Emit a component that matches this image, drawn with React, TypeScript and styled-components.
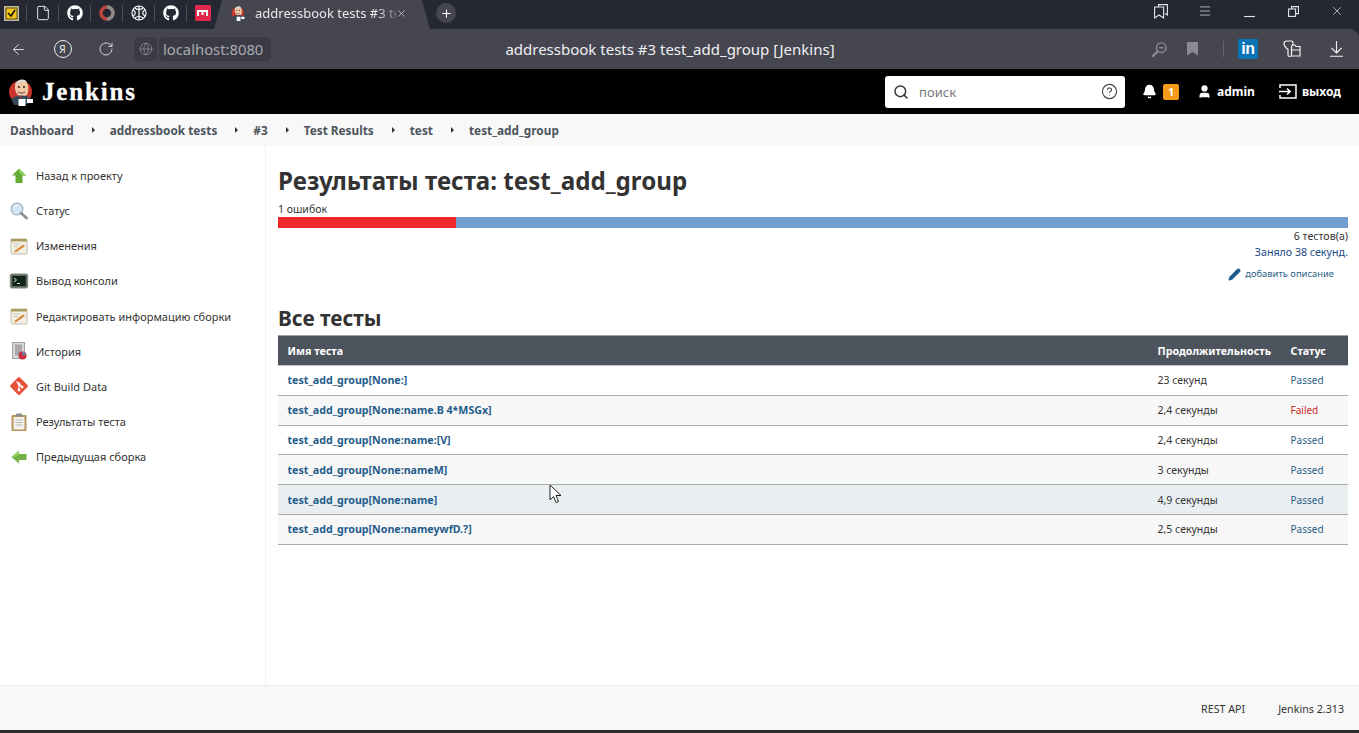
import React from "react";
import styled, { createGlobalStyle } from "styled-components";
import { ArrowLeft, Bell, CircleHelp, File, Globe, Menu, Plus, RotateCw, Search, User, X, Pencil } from "lucide-react";
import { FaGithub } from "react-icons/fa";

const GlobalStyle = createGlobalStyle`
  html, body { margin: 0; padding: 0; height: 100%; background: #fff; overflow: hidden; }
  body { font-family: "Noto Sans", "Open Sans", "Liberation Sans", sans-serif; color: #333; }
  * { box-sizing: border-box; }
`;

const Page = styled.div`
  position: relative;
  width: 1359px;
  height: 733px;
  display: flex;
  flex-direction: column;
  overflow: hidden;
  background: #252833;
`;

const TabStrip = styled.div`
  height: 29px;
  background: #252833;
  display: flex;
  align-items: center;
  color: #fff;
  flex: none;
`;

const PinnedTabs = styled.div`
  display: flex;
  align-items: center;
  height: 100%;
  margin-left: -5px;
`;

const Pinned = styled.div`
  width: 32px;
  height: 100%;
  display: flex;
  align-items: center;
  justify-content: center;
  position: relative;
  padding-bottom: 3px;
  &:not(:last-child)::after {
    content: "";
    position: absolute;
    right: 0;
    top: 5px;
    bottom: 7px;
    width: 1px;
    background: #4a4c56;
  }
`;

const ActiveTab = styled.div`
  width: 216px;
  height: 29px;
  margin-left: -5px;
  background: #45464f;
  clip-path: polygon(8px 0, 208px 0, 216px 100%, 0 100%);
  display: flex;
  align-items: center;
  padding: 0 0 3px 17px;
  font-size: 13px;
  color: #e8e8ea;
`;

const TabTitle = styled.span`
  width: 141px;
  margin-left: 10px;
  white-space: nowrap;
  -webkit-mask-image: linear-gradient(to right, #000 86%, rgba(0, 0, 0, 0.25) 100%);
  mask-image: linear-gradient(to right, #000 86%, rgba(0, 0, 0, 0.25) 100%);
`;

const NewTab = styled.div`
  width: 20px;
  height: 20px;
  margin-left: 6px;
  margin-bottom: 3px;
  border-radius: 50%;
  background: #45464f;
  display: flex;
  align-items: center;
  justify-content: center;
`;

const WindowControls = styled.div`
  margin-left: auto;
  display: flex;
  align-items: center;
  margin-bottom: 7px;
  color: #e6e6e8;
`;

const Toolbar = styled.div`
  height: 40px;
  flex: none;
  background: #45464f;
  border-top-right-radius: 9px;
  display: flex;
  align-items: center;
  color: #f2f2f2;
  padding-left: 10px;
  position: relative;
`;

const ToolIcons = styled.div`
  display: flex;
  align-items: center;
  gap: 26.5px;
  width: 124px;
  flex: none;
`;

const YandexCircle = styled.div`
  width: 18px;
  height: 18px;
  border: 1.3px solid #eee;
  border-radius: 50%;
  font-size: 10px;
  display: flex;
  align-items: center;
  justify-content: center;
  flex: none;
`;

const SiteChip = styled.div`
  width: 23px;
  height: 24px;
  background: #3a3b44;
  border-radius: 5px;
  display: flex;
  align-items: center;
  justify-content: center;
  color: #8a8b92;
  flex: none;
`;

const AddressChip = styled.div`
  height: 24px;
  margin-left: 2px;
  padding: 0 4px;
  width: 112px;
  background: #3a3b44;
  border-radius: 5px;
  font-size: 14.8px;
  line-height: 24px;
  color: #a9aab0;
  white-space: nowrap;
  flex: none;
`;

const PageTitle = styled.div`
  position: absolute;
  left: 0;
  right: 19px;
  top: 0;
  line-height: 40px;
  text-align: center;
  font-size: 15px;
  color: #f0f0f2;
  pointer-events: none;
`;

const ToolRight = styled.div`
  margin-left: auto;
  display: flex;
  align-items: center;
  padding-right: 1px;
`;

const ToolSlot = styled.div<{ $w: number }>`
  width: ${(p) => p.$w}px;
  display: flex;
  justify-content: center;
  align-items: center;
`;

const Divider = styled.div`
  width: 1px;
  height: 16px;
  margin: 0 2px 0 15px;
  background: #65666e;
`;

const LinkedIn = styled.div`
  width: 20px;
  height: 20px;
  background: #0a74b5;
  border-radius: 1px;
  color: #fff;
  font: 700 16px/20px "Liberation Sans", sans-serif;
  text-align: center;
  letter-spacing: -0.3px;
`;

const JenkinsHeader = styled.header`
  height: 45px;
  background: #000;
  display: flex;
  align-items: center;
  padding-left: 8px;
  color: #fff;
  flex: none;
`;

const Wordmark = styled.a`
  font: 700 25px "Liberation Serif", Georgia, serif;
  margin-left: 8px;
  letter-spacing: 1.85px;
  -webkit-text-stroke: 0.3px #fff;
`;

const SearchBox = styled.div`
  margin-left: auto;
  width: 240px;
  height: 32px;
  background: #fff;
  border-radius: 3px;
  display: flex;
  align-items: center;
  padding: 0 7px 0 8px;
  color: #333;
  font-size: 13px;
`;

const SearchHint = styled.span`
  color: #777;
  margin-left: 10px;
  flex: 1;
  padding-top: 1px;
`;

const HeadItem = styled.div<{ $ml: number; $mr?: number }>`
  display: flex;
  align-items: center;
  gap: 5px;
  margin-left: ${(p) => p.$ml}px;
  margin-right: ${(p) => p.$mr ?? 0}px;
  font-size: 12px;
  font-weight: 700;
  color: #fff;
`;

const CountBadge = styled.span`
  background: #f59a1b;
  color: #fff;
  width: 16px;
  height: 16px;
  border-radius: 2px;
  font-size: 11px;
  line-height: 16px;
  text-align: center;
  margin-left: 1px;
`;

const Breadcrumbs = styled.nav`
  height: 32px;
  background: #f8f8f8;
  display: flex;
  align-items: center;
  padding-left: 10px;
  font-size: 11.8px;
  font-weight: 700;
  color: #4d545d;
  flex: none;
`;

const Crumb = styled.a`
  white-space: nowrap;
`;

const Caret = styled.span`
  width: 0;
  height: 0;
  margin: 0 15px 0 18px;
  border-left: 3px solid #333;
  border-top: 3px solid transparent;
  border-bottom: 3px solid transparent;
`;

const Body = styled.div`
  display: flex;
  flex: 1;
  min-height: 0;
  background: #fff;
`;

const Sidebar = styled.aside`
  width: 266px;
  flex: none;
  border-right: 1px solid #f0f0f0;
  padding-top: 12px;
`;

const Task = styled.a`
  height: 35.15px;
  display: flex;
  align-items: center;
  padding-left: 10px;
  gap: 8px;
  font-size: 11px;
  color: #333;
`;

const TaskIcon = styled.svg`
  width: 18px;
  height: 18px;
  flex: none;
  overflow: visible;
`;

const Main = styled.main`
  flex: 1;
  min-width: 0;
  padding: 20px 11px 0 12px;
`;

const Title = styled.h1`
  margin: 0;
  font-size: 24.15px;
  font-weight: 700;
  line-height: 30px;
  color: #333;
`;

const FailCount = styled.div`
  font-size: 10.5px;
  line-height: 15px;
  margin-top: 6px;
  color: #333;
`;

const Bar = styled.div`
  height: 11px;
  display: flex;
  background: #729fcf;
`;

const BarFail = styled.div`
  background: #ef2929;
`;

const Meta = styled.div`
  text-align: right;
  font-size: 10.65px;
  line-height: 16px;
`;

const TimeLink = styled.a`
  color: #204a87;
  display: block;
`;

const AddDesc = styled.a`
  display: flex;
  justify-content: flex-end;
  align-items: center;
  gap: 4px;
  font-size: 9.4px;
  line-height: 14px;
  color: #2b6086;
  padding-right: 14px;
  margin-top: 7px;
`;

const SectionTitle = styled.h2`
  margin: 22px 0 0;
  font-size: 20.8px;
  line-height: 30px;
  font-weight: 700;
  color: #333;
`;

const Table = styled.table`
  width: 100%;
  border-collapse: collapse;
  table-layout: fixed;
  margin-top: 2px;
  font-size: 10.5px;
`;

const Th = styled.th<{ $w?: number }>`
  height: 30px;
  background: #4d545d;
  color: #fff;
  font-size: 10.7px;
  font-weight: 700;
  text-align: left;
  padding: 0 0 0 9.5px;
  border-top: 1px solid #9aa0a6;
  border-bottom: 1px solid #c4c7ca;
  width: ${(p) => (p.$w ? `${p.$w}px` : "auto")};
`;

const Row = styled.tr<{ $shade: string }>`
  height: 29.8px;
  background: ${(p) => p.$shade};
`;

const Td = styled.td`
  padding: 0 0 0 9.5px;
  border-bottom: 1px solid #a8acb0;
  color: #333;
`;

const TestLink = styled.a`
  color: #1f5c8a;
  font-weight: 700;
  font-size: 10.65px;
`;

const Status = styled.span<{ $failed: boolean }>`
  font-size: 10px;
  color: ${(p) => (p.$failed ? "#cc2a2a" : "#2b6086")};
`;

const Footer = styled.footer`
  height: 45px;
  flex: none;
  background: #f8f8f8;
  border-top: 1px solid #ececec;
  display: flex;
  justify-content: flex-end;
  align-items: center;
  gap: 33px;
  padding: 2px 15px 0 0;
  font-size: 10.7px;
  color: #333;
`;

const BottomEdge = styled.div`
  height: 3px;
  flex: none;
  background: #2c2c2c;
`;

const Pointer = styled.svg`
  position: absolute;
  left: 549px;
  top: 484px;
`;

const tests = [
  { name: "test_add_group[None:]", time: "23 секунд", status: "Passed", shade: "#ffffff" },
  { name: "test_add_group[None:name.B 4*MSGx]", time: "2,4 секунды", status: "Failed", shade: "#f7f7f8" },
  { name: "test_add_group[None:name:[V]", time: "2,4 секунды", status: "Passed", shade: "#ffffff" },
  { name: "test_add_group[None:nameM]", time: "3 секунды", status: "Passed", shade: "#f7f7f8" },
  { name: "test_add_group[None:name]", time: "4,9 секунды", status: "Passed", shade: "#e9eef1" },
  { name: "test_add_group[None:nameywfD.?]", time: "2,5 секунды", status: "Passed", shade: "#f7f7f8" },
];

const crumbs = ["Dashboard", "addressbook tests", "#3", "Test Results", "test", "test_add_group"];

const JenkinsLogo = ({ size = 26 }: { size?: number }) => (
  <svg width={size} height={size * 1.15} viewBox="0 0 26 30">
    <circle cx="12.500" cy="15" r="11.500" fill="#c8352c" />
    <path d="M7 11c-1-8 11-11 13-3 1 4 0 8-1 10-3 2-8 2-10-1-1-2-2-3-2-6z" fill="#f0c8a8" />
    <path d="M7 9c0-6 9-9 12-4-3-1-9-1-12 4z" fill="#d9dce0" />
    <circle cx="11" cy="10" r="1" fill="#222" />
    <circle cx="16" cy="10" r="1" fill="#222" />
    <path d="M10 15c2 1.500 5 1.500 7 0" stroke="#7a3a2a" fill="none" />
    <path d="M3.500 23c1-5 15-6 18-2l1 5-8 2H6z" fill="#34495a" />
    <path d="M11 19l3 1-1 2z" fill="#c8352c" />
    <path d="M10.500 22h7v8h-7zM19 22h6v4h-6z" fill="#fff" />
  </svg>
);

const PagesIcon = () => (
  <svg width="14" height="15" viewBox="0 0 14 15" fill="none" stroke="currentColor" strokeWidth="1.1">
    <path d="M4.500 3V.6h8.900v10.400L11 9.500" />
    <path d="M.6 3h9v11l-4.500-3-4.500 3z" />
  </svg>
);

const MinimizeIcon = () => (
  <svg width="11" height="14" viewBox="0 0 11 14" stroke="currentColor" strokeWidth="1.1">
    <path d="M0 12.500h11" />
  </svg>
);

const RestoreIcon = () => (
  <svg width="11" height="11" viewBox="0 0 11 11" fill="none" stroke="currentColor" strokeWidth="1.1">
    <path d="M3.500 3V.6h7v7H8" />
    <rect x=".6" y="3" width="7" height="7.400" />
  </svg>
);

const ZoomMinusIcon = () => (
  <svg width="15" height="15" viewBox="0 0 15 15" fill="none" stroke="#8a8b92" strokeWidth="1.4">
    <circle cx="9.300" cy="5.700" r="4.800" />
    <path d="M6.800 5.700h5" />
    <path d="M5.500 9.500L1 14" strokeWidth="2.400" strokeLinecap="round" />
  </svg>
);

const BookmarkIcon = () => (
  <svg width="11" height="14" viewBox="0 0 11 14">
    <path d="M0 0h11v13.500L5.500 10 0 13.500z" fill="#8a8b92" />
  </svg>
);

const ExtensionIcon = () => (
  <svg width="18" height="18" viewBox="0 0 18 18" fill="none" stroke="currentColor" strokeWidth="1.2">
    <path d="M1 3.500C1 1.500 2.500 1 4 1h4c2 0 2.500 1.500 2 3l-1.500 2.500V15c0 2-3.500 2-3.500 0V9.500C3 8 1 6 1 3.500z" />
    <path d="M9.500 5H12l1 1.500h4V16H8.500M8.800 10H17" />
  </svg>
);

const DownloadIcon = () => (
  <svg width="13" height="16" viewBox="0 0 13 16" fill="none" stroke="currentColor" strokeWidth="1.1">
    <path d="M6.500 0v11.500M1.500 7l5 5 5-5M0 15.300h13" />
  </svg>
);

const LogoutIcon = () => (
  <svg width="18" height="15" viewBox="0 0 18 15" fill="none" stroke="currentColor" strokeWidth="1.5">
    <path d="M1 4V1h16v13H1v-3" />
    <path d="M0 7.500h11M8 4.500l3.200 3L8 10.500" />
  </svg>
);

const taskIcons: React.ReactNode[] = [
  <g key="0">
    <path d="M9 1.500l7 7h-3.500v7.500h-7V8.500H2z" fill="#63ad35" />
    <path d="M9 1.500l7 7h-3.500L9 5z" fill="#8ccf5a" />
  </g>,
  <g key="1">
    <circle cx="7" cy="7" r="5.800" fill="#d6e5f5" stroke="#9ab0c8" strokeWidth="1.300" />
    <path d="M4 5c1-1.500 3-2 4.500-1.500" stroke="#fff" fill="none" />
    <path d="M11.200 11.200l5.300 4.800" stroke="#8b8f96" strokeWidth="2.800" strokeLinecap="round" />
  </g>,
  <g key="2">
    <rect x="1" y="2" width="16" height="15" rx="1" fill="#f2f0e4" stroke="#c0bdae" />
    <path d="M1 2h16v2.500H1z" fill="#a89c5e" />
    <path d="M5 13.500l8-6 2 1.500-8.500 6L4 15.500z" fill="#d98a3a" />
    <path d="M3.500 7h6M3.500 9.500h4" stroke="#c9c7b8" />
  </g>,
  <g key="3">
    <rect x="0.300" y="2" width="17.400" height="14" rx="1.500" fill="#5f6d5f" stroke="#888" />
    <rect x="2.300" y="4" width="13.400" height="10" fill="#10251a" />
    <path d="M4 6l2.500 2L4 10M7 11.500h3" stroke="#e2e2e2" strokeWidth="1" fill="none" />
  </g>,
  <g key="4">
    <rect x="1" y="2" width="16" height="15" rx="1" fill="#f2f0e4" stroke="#c0bdae" />
    <path d="M1 2h16v2.500H1z" fill="#a89c5e" />
    <path d="M5 13.500l8-6 2 1.500-8.500 6L4 15.500z" fill="#d98a3a" />
    <path d="M3.500 7h6M3.500 9.500h4" stroke="#c9c7b8" />
  </g>,
  <g key="5">
    <rect x="2.500" y="0.500" width="12" height="16" fill="#d8d8d8" stroke="#a0a0a0" />
    <rect x="5" y="2.500" width="7" height="11" fill="#a8a8a8" />
    <circle cx="12.500" cy="13.500" r="4" fill="#c92f3f" />
    <path d="M12.500 13.500l3.500-1a4 4 0 0 0-3.500-3z" fill="#5f8fbf" />
  </g>,
  <g key="6">
    <rect x="2.300" y="2.300" width="13.400" height="13.400" rx="1.500" transform="rotate(45 9 9)" fill="#e8503a" />
    <path d="M6.500 4.500l5.500 5.500M9 7v6" stroke="#fff" strokeWidth="1.200" />
    <circle cx="9" cy="13" r="1.400" fill="#fff" />
    <circle cx="12" cy="10" r="1.400" fill="#fff" />
    <circle cx="9" cy="7" r="1.400" fill="#fff" />
  </g>,
  <g key="7">
    <rect x="1.500" y="2" width="15" height="16" rx="1" fill="#b8935a" />
    <rect x="3.500" y="4" width="11" height="12.500" fill="#f0f0ec" />
    <rect x="6" y="0.500" width="6" height="3" rx="1" fill="#8e8e8e" />
    <path d="M5.500 7h7M5.500 9.500h7M5.500 12h7" stroke="#bbb" />
  </g>,
  <g key="8">
    <path d="M1.500 9l7.500-6.500V6h7.500v6H9v3.500z" fill="#72b344" />
    <path d="M1.500 9L9 2.500V6L5 9z" fill="#97d068" />
  </g>,
];

const taskLabels = [
  "Назад к проекту",
  "Статус",
  "Изменения",
  "Вывод консоли",
  "Редактировать информацию сборки",
  "История",
  "Git Build Data",
  "Результаты теста",
  "Предыдущая сборка",
];

const App: React.FC = () => (
  <Page>
    <GlobalStyle />
    <TabStrip>
      <PinnedTabs>
        <Pinned>
          <svg width="15" height="15" viewBox="0 0 15 15">
            <rect x="0.500" y="0.500" width="14" height="14" fill="#f3c614" stroke="#bbb" />
            <rect x="2" y="2" width="11" height="11" fill="#f3c614" stroke="#444" />
            <path d="M4 7l3 3 4-6" stroke="#111" strokeWidth="1.600" fill="none" />
          </svg>
        </Pinned>
        <Pinned><File size={16} color="#fff" strokeWidth={1.3} /></Pinned>
        <Pinned><FaGithub size={16} color="#fff" /></Pinned>
        <Pinned>
          <svg width="16" height="16" viewBox="0 0 16 16">
            <circle cx="8" cy="8" r="6" fill="none" stroke="#b9453f" strokeWidth="3.500" />
            <path d="M8 2a6 6 0 0 1 0 12" fill="none" stroke="#8b8b8b" strokeWidth="3.500" />
          </svg>
        </Pinned>
        <Pinned>
          <svg width="16" height="16" viewBox="0 0 16 16" fill="none" stroke="#fff" strokeWidth="1.200">
            <circle cx="8" cy="8" r="7" />
            <path d="M8 1v14M2 5c3 1 3 5 0 6M14 5c-3 1-3 5 0 6M4 3c2 2 6 2 8 0M4 13c2-2 6-2 8 0" />
          </svg>
        </Pinned>
        <Pinned><FaGithub size={16} color="#fff" /></Pinned>
        <Pinned>
          <svg width="16" height="16" viewBox="0 0 16 16">
            <rect width="16" height="16" fill="#e0274c" rx="1" />
            <path d="M3 11V6h9v5M7.500 6v4" stroke="#fff" strokeWidth="2" fill="none" />
          </svg>
        </Pinned>
      </PinnedTabs>
      <ActiveTab>
        <JenkinsLogo size={14} />
        <TabTitle>addressbook tests #3 te</TabTitle>
        <X size={11} strokeWidth={1.5} color="#ddd" />
      </ActiveTab>
      <NewTab><Plus size={13} /></NewTab>
      <WindowControls>
        <ToolSlot $w={44}><PagesIcon /></ToolSlot>
        <ToolSlot $w={44}><Menu size={14} strokeWidth={1.2} /></ToolSlot>
        <ToolSlot $w={44}><MinimizeIcon /></ToolSlot>
        <ToolSlot $w={44}><RestoreIcon /></ToolSlot>
        <ToolSlot $w={44}><X size={14} strokeWidth={1.2} /></ToolSlot>
      </WindowControls>
    </TabStrip>
    <Toolbar>
      <ToolIcons>
        <ArrowLeft size={17} strokeWidth={1.2} />
        <YandexCircle>Я</YandexCircle>
        <RotateCw size={16} strokeWidth={1.2} />
      </ToolIcons>
      <SiteChip><Globe size={14} strokeWidth={1.4} /></SiteChip>
      <AddressChip>localhost:8080</AddressChip>
      <PageTitle>addressbook tests #3 test_add_group [Jenkins]</PageTitle>
      <ToolRight>
        <ToolSlot $w={34}><ZoomMinusIcon /></ToolSlot>
        <ToolSlot $w={32}><BookmarkIcon /></ToolSlot>
        <Divider />
        <ToolSlot $w={44}><LinkedIn>in</LinkedIn></ToolSlot>
        <ToolSlot $w={44}><ExtensionIcon /></ToolSlot>
        <ToolSlot $w={44}><DownloadIcon /></ToolSlot>
      </ToolRight>
    </Toolbar>
    <JenkinsHeader>
      <JenkinsLogo />
      <Wordmark>Jenkins</Wordmark>
      <SearchBox>
        <Search size={16} strokeWidth={2.2} />
        <SearchHint>поиск</SearchHint>
        <CircleHelp size={17} strokeWidth={1.6} color="#444" />
      </SearchBox>
      <HeadItem $ml={17}>
        <Bell size={15} fill="#fff" />
        <CountBadge>1</CountBadge>
      </HeadItem>
      <HeadItem $ml={18}>
        <User size={15} fill="#fff" />
        admin
      </HeadItem>
      <HeadItem $ml={24} $mr={18}>
        <LogoutIcon />
        выход
      </HeadItem>
    </JenkinsHeader>
    <Breadcrumbs>
      {crumbs.map((c, i) => (
        <React.Fragment key={c}>
          {i > 0 && <Caret />}
          <Crumb>{c}</Crumb>
        </React.Fragment>
      ))}
    </Breadcrumbs>
    <Body>
      <Sidebar>
        {taskLabels.map((label, i) => (
          <Task key={label}>
            <TaskIcon viewBox="0 0 18 18">{taskIcons[i]}</TaskIcon>
            {label}
          </Task>
        ))}
      </Sidebar>
      <Main>
        <Title>Результаты теста: test_add_group</Title>
        <FailCount>1 ошибок</FailCount>
        <Bar>
          <BarFail style={{ width: `${(1 / 6) * 100}%` }} />
        </Bar>
        <Meta>
          6 тестов(а)
          <TimeLink>Заняло 38 секунд.</TimeLink>
        </Meta>
        <AddDesc>
          <Pencil size={13} fill="#1f5c8a" color="#1f5c8a" />
          добавить описание
        </AddDesc>
        <SectionTitle>Все тесты</SectionTitle>
        <Table>
          <thead>
            <tr>
              <Th>Имя теста</Th>
              <Th $w={133}>Продолжительность</Th>
              <Th $w={67}>Статус</Th>
            </tr>
          </thead>
          <tbody>
            {tests.map((t) => (
              <Row key={t.name} $shade={t.shade}>
                <Td><TestLink>{t.name}</TestLink></Td>
                <Td>{t.time}</Td>
                <Td><Status $failed={t.status === "Failed"}>{t.status}</Status></Td>
              </Row>
            ))}
          </tbody>
        </Table>
      </Main>
    </Body>
    <Footer>
      <span>REST API</span>
      <span>Jenkins 2.313</span>
    </Footer>
    <BottomEdge />
    <Pointer width="13" height="20" viewBox="0 0 13 20">
      <path d="M1 1v15l3.500-3.500 2.500 6 2.500-1-2.500-6h5z" fill="#fff" stroke="#222" strokeWidth="1" />
    </Pointer>
  </Page>
);

export default App;
